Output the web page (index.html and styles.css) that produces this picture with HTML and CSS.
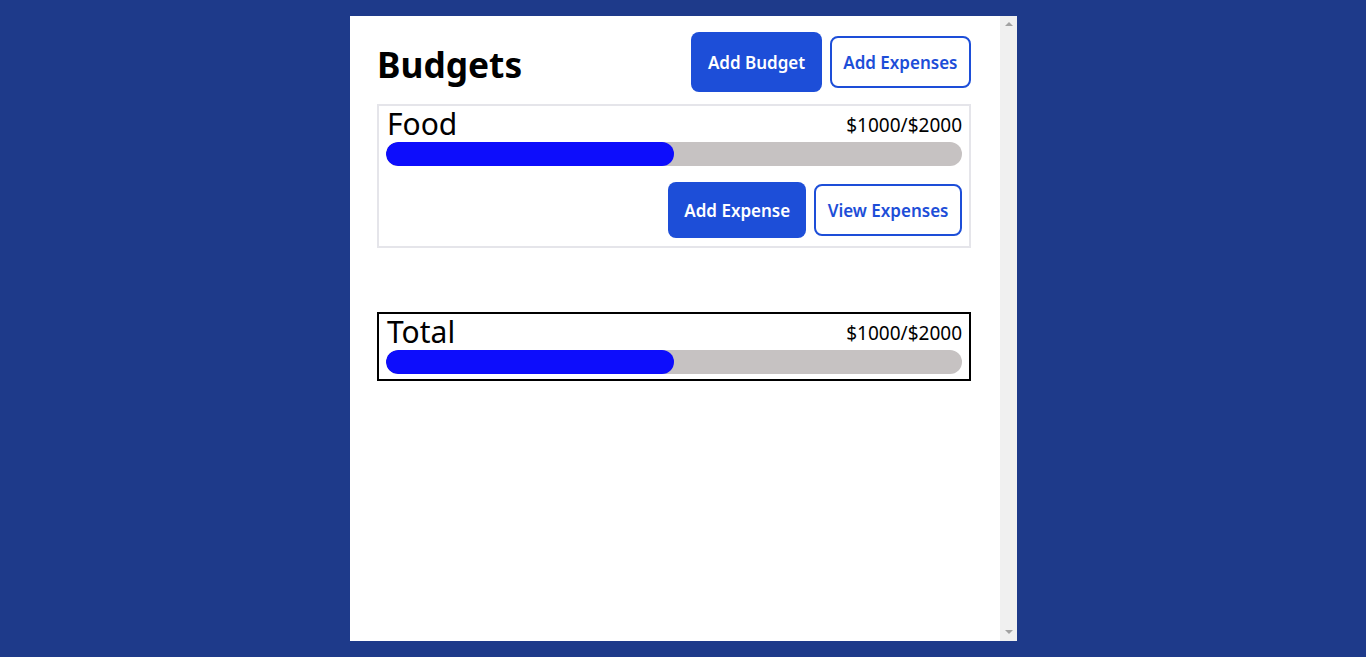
FILE: index.html
```html
<!DOCTYPE html>
<html lang="en">
<head>
<meta charset="utf-8">
<title>Budgets</title>
<link rel="stylesheet" href="styles.css">
</head>
<body>
<div class="frame">
  <main class="content">
    <header class="header">
      <h1 class="title">Budgets</h1>
      <div class="actions">
        <button class="btn btn-primary btn-lg">Add Budget</button>
        <button class="btn btn-outline">Add Expenses</button>
      </div>
    </header>

    <section class="card">
      <div class="card-head">
        <span class="card-name">Food</span>
        <span class="card-amount">$1000/$2000</span>
      </div>
      <div class="bar"><div class="bar-fill" style="width:50%"></div></div>
      <div class="card-actions">
        <button class="btn btn-primary btn-md">Add Expense</button>
        <button class="btn btn-outline">View Expenses</button>
      </div>
    </section>

    <section class="card card-total">
      <div class="card-head">
        <span class="card-name">Total</span>
        <span class="card-amount">$1000/$2000</span>
      </div>
      <div class="bar"><div class="bar-fill" style="width:50%"></div></div>
    </section>
  </main>
  <div class="scrollbar">
    <span class="arrow arrow-up"></span>
    <span class="arrow arrow-down"></span>
  </div>
</div>
</body>
</html>
```

FILE: styles.css
```css
html, body {
  margin: 0;
  padding: 0;
}

body {
  background: #1e3a8a;
  height: 657px;
  overflow: hidden;
  font-family: "Noto Sans", "Open Sans", sans-serif;
  color: #000;
}

.frame {
  width: 667px;
  height: 625px;
  margin: 16px 0 0 350px;
  background: #fff;
  display: flex;
}

.content {
  flex: 1;
  padding: 16px 29px 0 27px;
}

.header {
  display: flex;
  align-items: center;
  justify-content: space-between;
  height: 60px;
}

.title {
  margin: 0;
  font-size: 35.3px;
  font-weight: 700;
  line-height: 1;
  padding-top: 6px;
}

.actions {
  display: flex;
  align-items: center;
  gap: 8px;
}

.btn {
  font-family: inherit;
  font-size: 17px;
  font-weight: 600;
  line-height: 24px;
  border-radius: 8px;
  cursor: pointer;
  box-sizing: border-box;
}

.btn-primary {
  background: #1d4ed8;
  color: #fff;
  border: none;
}

.btn-lg {
  padding: 19px 16.5px 17px;
}

.btn-md {
  padding: 17px 16px 15px;
}

.btn-outline {
  background: #fff;
  color: #1d4ed8;
  border: 2px solid #1d4ed8;
  padding: 13px 11.5px 11px;
}

.card {
  margin-top: 12px;
  border: 2px solid #e5e5ea;
  padding: 0 7px 8px;
}

.card-total {
  margin-top: 64px;
  border-color: #000;
  padding-bottom: 5px;
}

.card-head {
  display: flex;
  justify-content: space-between;
  align-items: flex-start;
  height: 36px;
}

.card-name {
  font-size: 30px;
  line-height: 36px;
  padding-left: 1px;
}

.card-amount {
  font-size: 19px;
  line-height: 26px;
  padding-top: 6px;
}

.bar {
  height: 24px;
  border-radius: 12px;
  background: #c6c2c2;
  overflow: hidden;
}

.bar-fill {
  height: 100%;
  background: #0d0dfc;
  border-radius: 12px;
}

.card-actions {
  display: flex;
  justify-content: flex-end;
  align-items: center;
  gap: 8px;
  margin-top: 16px;
}

.scrollbar {
  width: 17px;
  background: #f0f0f0;
  display: flex;
  flex-direction: column;
  justify-content: space-between;
  align-items: center;
  padding: 6px 0 7px;
  box-sizing: border-box;
}

.arrow {
  width: 0;
  height: 0;
  border-left: 4px solid transparent;
  border-right: 4px solid transparent;
}

.arrow-up {
  border-bottom: 4px solid #a3a3a3;
}

.arrow-down {
  border-top: 4px solid #a3a3a3;
}
```
